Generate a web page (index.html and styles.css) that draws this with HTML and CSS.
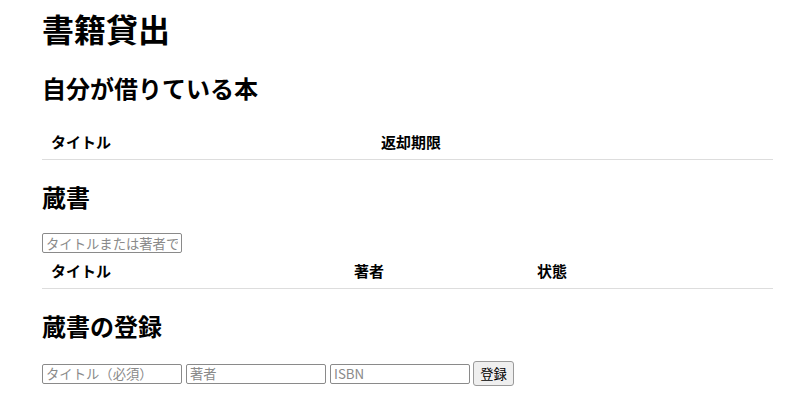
FILE: index.html
```html
<!DOCTYPE html>
<html lang="ja">
<head>
<meta charset="utf-8">
<title>書籍貸出</title>
<link rel="stylesheet" href="styles.css">
</head>
<body>
<div class="page">
  <h1 class="title">書籍貸出</h1>
  <h2 class="section first">自分が借りている本</h2>
  <table class="list">
    <thead>
      <tr><th class="c-title1">タイトル</th><th>返却期限</th></tr>
    </thead>
    <tbody></tbody>
  </table>
  <h2 class="section">蔵書</h2>
  <input class="field search" type="text" placeholder="タイトルまたは著者で検索">
  <table class="list list2">
    <thead>
      <tr><th class="c-title2">タイトル</th><th class="c-author">著者</th><th>状態</th></tr>
    </thead>
    <tbody></tbody>
  </table>
  <h2 class="section">蔵書の登録</h2>
  <form class="register">
    <input class="field" type="text" placeholder="タイトル（必須）">
    <input class="field" type="text" placeholder="著者">
    <input class="field" type="text" placeholder="ISBN">
    <button class="btn" type="button">登録</button>
  </form>
</div>
</body>
</html>
```
FILE: styles.css
```css
html, body {
  margin: 0;
  padding: 0;
  background: #fff;
}
body {
  font-family: "Noto Sans CJK JP", "Noto Sans", sans-serif;
  color: #000;
}
.page {
  padding: 8px 0 0 42px;
  width: 731px;
}
.title {
  margin: 0;
  font-size: 32px;
  line-height: 40px;
  font-weight: 700;
}
.section {
  margin: 21px 0 0;
  font-size: 24px;
  line-height: 32px;
  font-weight: 700;
}
.section.first {
  margin-top: 24px;
}
.list {
  margin-top: 21px;
  width: 731px;
  border-collapse: collapse;
  table-layout: fixed;
}
.list th {
  text-align: left;
  font-size: 15px;
  line-height: 18px;
  font-weight: 700;
  padding: 8px 9px;
  border-bottom: 1px solid #ddd;
}
.c-title1 { width: 312px; }
.c-title2 { width: 285px; }
.c-author { width: 165px; }
.list2 {
  margin-top: 1px;
}
.field {
  box-sizing: border-box;
  width: 140px;
  height: 20px;
  margin: 0;
  padding: 0 3px;
  border: 1px solid #8a8a8a;
  border-radius: 2px;
  font-family: "Noto Sans CJK JP", sans-serif;
  font-size: 13.333px;
  line-height: 18px;
  display: block;
}
.field::placeholder {
  color: #8a8a8a;
}
.search {
  margin-top: 20px;
}
.register {
  margin: 19px 0 0;
  display: flex;
  align-items: center;
  gap: 4px;
  height: 25px;
}
.btn {
  box-sizing: border-box;
  height: 25px;
  width: 41px;
  padding: 0;
  margin-left: -1px;
  border: 1px solid #9a9a9a;
  border-radius: 3px;
  background: #efefef;
  font-family: "Noto Sans CJK JP", sans-serif;
  font-size: 13.333px;
  color: #000;
}
```
